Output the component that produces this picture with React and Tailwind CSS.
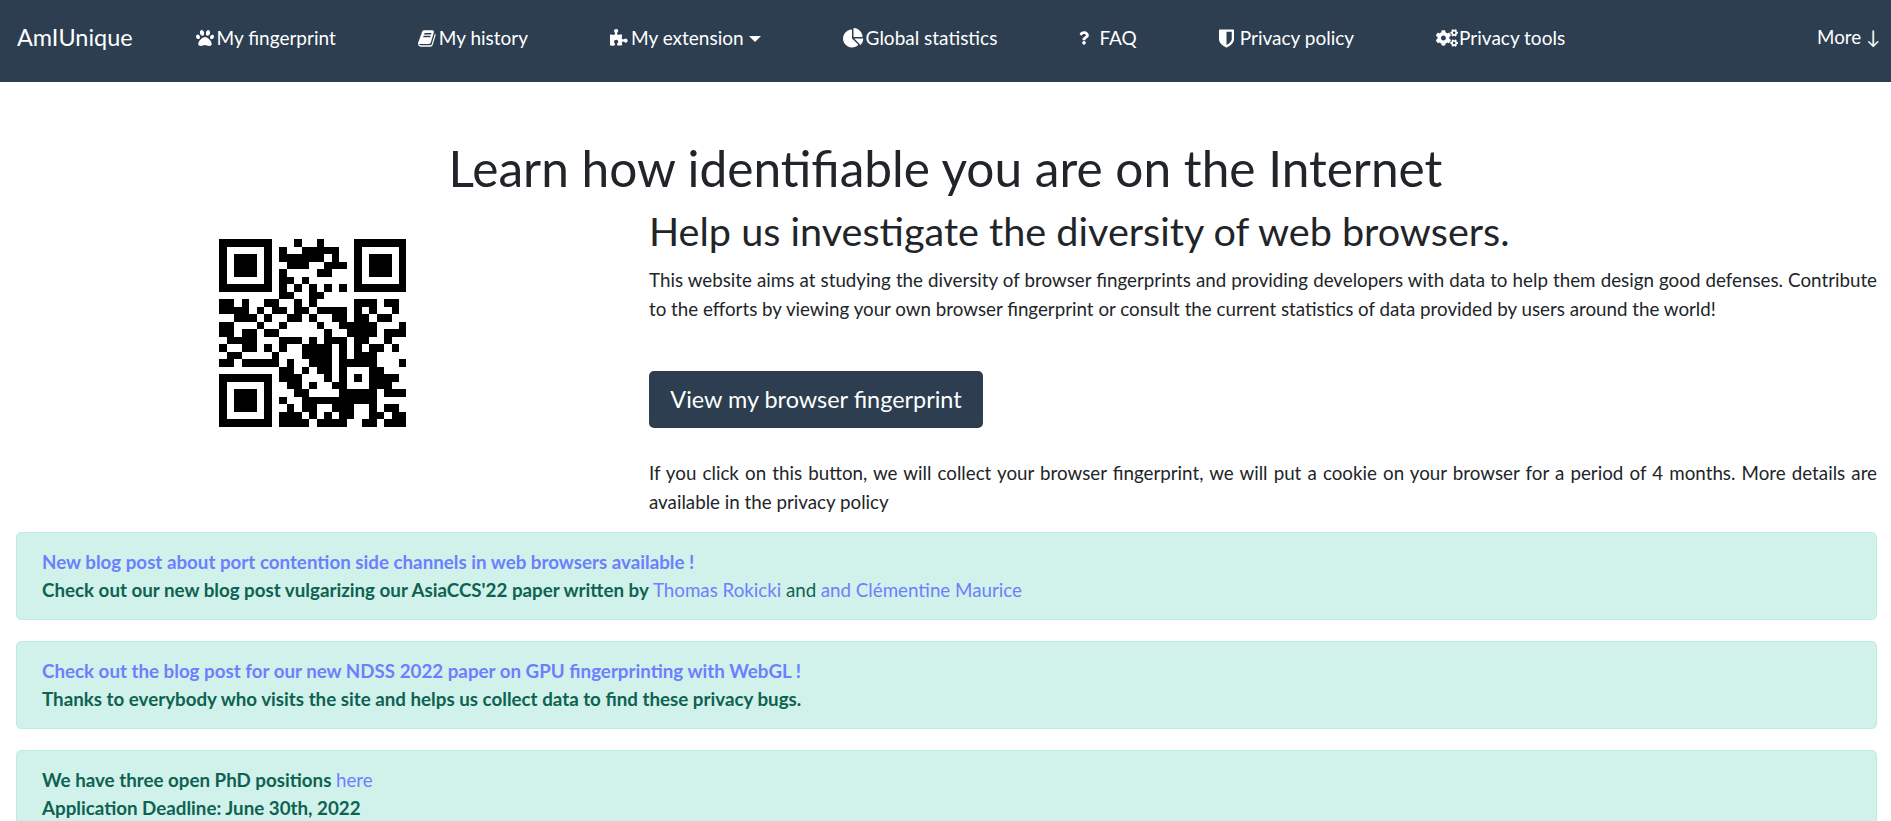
import { FaPaw, FaQuestion, FaCogs } from "react-icons/fa";

// QR modules, 25x25
const QR = [
  "1111111000100100001111111",
  "1000001010011111001000001",
  "1011101011111101001011101",
  "1011101001110011101011101",
  "1011101010000110001011101",
  "1000001011010000001000001",
  "1111111010101010101111111",
  "0000000011001100000000000",
  "1101001100101000001110110",
  "1111010110110111101010010",
  "0011101001101001101101100",
  "1100010010000100111110001",
  "1101101100000010011110111",
  "0111100011101011101100100",
  "1001101010011110101011010",
  "0110000100011110101110000",
  "1101111101001110111110001",
  "0000000011010110100011000",
  "1111111011100010101011110",
  "1000001001101001100011100",
  "1011101000110000111110111",
  "1011101010011111111110000",
  "1011101001011001110010110",
  "1000001011101010110011011",
  "1111111011110111100110111",
];

function QrCode({ size }) {
  return (
    <svg width={size} height={size} viewBox="0 0 25 25" shapeRendering="crispEdges">
      {QR.map((row, y) =>
        row.split("").map((c, x) =>
          c === "1" ? <rect key={x + "-" + y} x={x} y={y} width="1" height="1" fill="#000" /> : null
        )
      )}
    </svg>
  );
}

// font awesome 4 glyphs
function Fa4({ d, className }) {
  return (
    <svg viewBox="0 0 1792 1792" className={className} fill="currentColor" fillRule="evenodd">
      <path d={d} />
    </svg>
  );
}

const BookIcon = ({ className }) => (
  <Fa4 className={className} d="M1639 478q40 57 18 129l-275 906q-19 64-76.5 107.5t-122.5 43.5h-923q-77 0-148.5-53.5t-99.5-131.5q-24-67-2-127 0-4 3-27t4-37q1-8-3-21.5t-3-19.5q2-11 8-21t16.5-23.5 16.5-23.5q23-38 45-91.5t30-91.5q3-10 .5-30t-.5-28q3-11 17-28t17-23q21-36 42-92t25-90q1-9-2.5-32t.5-28q4-13 22-30.5t22-22.5q19-26 42.5-84.5t27.5-96.5q1-8-3-25.5t-2-26.5q2-8 9-18t18-23 17-21q8-12 16.5-30.5t15-35 16-36 19.5-32 26.5-23.5 36-11.5 47.5 5.5l-1 3q38-9 51-9h761q74 0 114 56t18 130l-274 906q-36 119-71.5 153.5t-128.5 34.5h-869q-27 0-38 15-11 16-1 43 24 70 144 70h923q29 0 56-15.5t35-41.5l300-987q7-22 5-57 38 15 59 43zm-1064 2q-4 13 2 22.5t20 9.5h608q13 0 25.5-9.5t16.5-22.5l21-64q4-13-2-22.5t-20-9.5h-608q-13 0-25.5 9.5t-16.5 22.5zm-83 256q-4 13 2 22.5t20 9.5h608q13 0 25.5-9.5t16.5-22.5l21-64q4-13-2-22.5t-20-9.5h-608q-13 0-25.5 9.5t-16.5 22.5z" />
);
const PuzzleIcon = ({ className }) => (
  <Fa4 className={className} d="M1664 1098q0 81-44.5 135t-123.5 54q-41 0-77.5-17.5t-59-38-56.5-38-71-17.5q-110 0-110 124 0 39 16 115t15 115v5q-22 0-33 1-34 3-97.5 11.5t-115.5 13.5-98 5q-61 0-103-26.5t-42-83.5q0-37 17.5-71t38-56.5 38-59 17.5-77.5q0-79-54-123.5t-135-44.5q-84 0-143 45.5t-59 127.5q0 43 15 83t33.5 64.5 33.5 53 15 50.5q0 45-46 89-37 35-117 35-95 0-245-24-9-2-27.5-4t-27.5-4l-13-2q-1 0-3-1-2 0-2-1v-1024q2 1 17.5 3.5t34 5 21.5 3.5q150 24 245 24 80 0 117-35 46-44 46-89 0-22-15-50.5t-33.5-53-33.5-64.5-15-83q0-82 59-127.5t144-45.5q80 0 134 44.5t54 123.5q0 41-17.5 77.5t-38 59-38 56.5-17.5 71q0 57 42 83.5t103 26.5q64 0 180-15t163-17v2q-1 2-3.5 17.5t-5 34-3.5 21.5q-24 150-24 245 0 80 35 117 44 46 89 46 22 0 50.5-15t53-33.5 64.5-33.5 83-15q82 0 127.5 59t45.5 143z" />
);
const PieIcon = ({ className }) => (
  <Fa4 className={className} d="M768 890l546 546q-106 108-247.5 168t-298.5 60q-209 0-385.5-103t-279.5-279.5-103-385.5 103-385.5 279.5-279.5 385.5-103v762zm187 6h773q0 157-60 298.5t-168 247.5zm709-128h-768v-768q209 0 385.5 103t279.5 279.5 103 385.5z" />
);
const ShieldIcon = ({ className }) => (
  <Fa4 className={className} d="M1344 960v-640h-448v1137q119-63 213-137 235-184 235-360zm192-768v768q0 86-33.5 170.5t-83 150-118 127.5-126.5 103-121 77.5-89.5 49.5-42.5 20q-12 6-26 6t-26-6q-16-7-42.5-20t-89.5-49.5-121-77.5-126.5-103-118-127.5-83-150-33.5-170.5v-768q0-26 19-45t45-19h1152q26 0 45 19t19 45z" />
);

const navItems = [
  { label: "My fingerprint", icon: FaPaw, iconClass: "mr-[3px] h-[18px] w-[18px]" },
  { label: "My history", icon: BookIcon, iconClass: "mr-[2px] h-[19px] w-[19px]" },
  { label: "My extension", icon: PuzzleIcon, iconClass: "mr-[2px] h-[19px] w-[19px]", caret: true },
  { label: "Global statistics", icon: PieIcon, iconClass: "mr-[2px] h-[21px] w-[21px]" },
  { label: "FAQ", icon: FaQuestion, iconClass: "mr-[10px] h-[14px] w-[10px]" },
  { label: "Privacy policy", icon: ShieldIcon, iconClass: "mr-[3px] h-[21px] w-[21px] -ml-[3px]" },
  { label: "Privacy tools", icon: FaCogs, iconClass: "mr-[1px] h-[18px] w-[22px]" },
];

function Alert({ children }) {
  return (
    <div className="mb-[21px] rounded-[5px] border border-[#bdece2] bg-[#d1f2eb] px-[25px] py-[15px] text-[18.75px] leading-[28px] text-[#0e6251] font-bold">
      {children}
    </div>
  );
}

function Link({ children, bold }) {
  return <a href="#" className={bold ? "text-[#6c7fff]" : "font-normal text-[#6c7fff]"}>{children}</a>;
}

export default function App() {
  return (
    <div className="h-[821px] overflow-hidden bg-white text-[#212529]" style={{ fontFamily: "Lato, sans-serif" }}>
      {/* Navbar */}
      <nav className="flex h-[82px] items-center bg-[#2c3e50] pb-[6px] pl-[17px] pr-[11px] text-white">
        <a href="#" className="mr-[63px] text-[23.44px] leading-none">AmIUnique</a>
        <div className="flex items-center gap-[82px] text-[19px]">
          {navItems.map((item) => (
            <a key={item.label} href="#" className="flex items-center">
              <item.icon className={item.iconClass} />
              {item.label}
              {item.caret && <span className="ml-[5px] mt-[1px] border-x-[6px] border-t-[6px] border-x-transparent border-t-white" />}
            </a>
          ))}
        </div>
        <a href="#" className="ml-auto mb-[2px] text-[18.75px]">More ↓</a>
      </nav>

      {/* Hero */}
      <h1 className="mt-[57px] text-center text-[49.6px] leading-[58px]">Learn how identifiable you are on the Internet</h1>
      <div className="flex pl-[16px] pr-[14px]">
        <div className="flex w-[633px] justify-center pt-[42px] pr-[40px]">
          <div className="h-[188px]"><QrCode size={187.5} /></div>
        </div>
        <div className="flex-1">
          <h2 className="mt-[11px] text-[39.6px] leading-[46px]">Help us investigate the diversity of web browsers.</h2>
          <p className="mt-[11px] text-justify text-[18.75px] leading-[29px]">
            This website aims at studying the diversity of browser fingerprints and providing developers with data to help them design good defenses. Contribute to the efforts by viewing your own browser fingerprint or consult the current statistics of data provided by users around the world!
          </p>
          <a href="#" className="mt-[48px] block h-[57px] w-[334px] rounded-[5px] bg-[#2c3e50] text-center text-[23.44px] leading-[57px] text-white">View my browser fingerprint</a>
          <p className="mt-[30px] text-justify text-[18.75px] leading-[29px]">
            If you click on this button, we will collect your browser fingerprint, we will put a cookie on your browser for a period of 4 months. More details are available in the privacy policy
          </p>
        </div>
      </div>

      {/* Alerts */}
      <div className="mt-[16px] pl-[16px] pr-[14px]">
        <Alert>
          <Link bold>New blog post about port contention side channels in web browsers available !</Link>
          <br />
          Check out our new blog post vulgarizing our AsiaCCS'22 paper written by <Link>Thomas Rokicki</Link> <span className="font-normal">and</span> <Link>and Clémentine Maurice</Link>
        </Alert>
        <Alert>
          <Link bold>Check out the blog post for our new NDSS 2022 paper on GPU fingerprinting with WebGL !</Link>
          <br />
          Thanks to everybody who visits the site and helps us collect data to find these privacy bugs.
        </Alert>
        <Alert>
          We have three open PhD positions <Link>here</Link>
          <br />
          Application Deadline: June 30th, 2022
        </Alert>
      </div>
    </div>
  );
}
